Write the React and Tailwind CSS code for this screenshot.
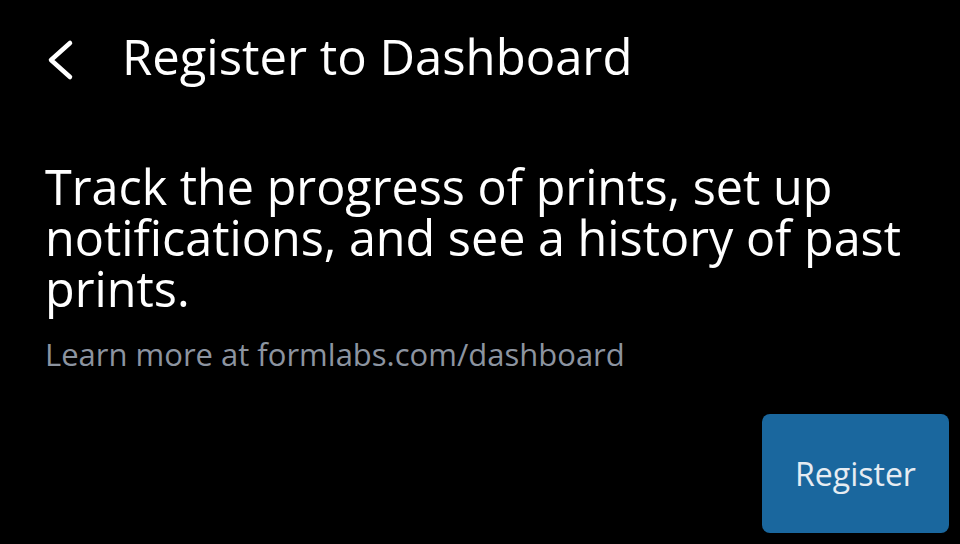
export default function App() {
  return (
    <div className="w-[960px] h-[544px] bg-black text-white flex flex-col font-['Open_Sans',sans-serif] overflow-hidden">
      <div className="flex items-center h-[112px] pl-[40px] shrink-0">
        <button className="w-[40px] h-[40px] flex items-center justify-center mt-[8px]">
          <svg width="30" height="42" viewBox="0 0 30 42" fill="none">
            <polyline points="25,4 6,21 25,38" stroke="white" strokeWidth="4.5" strokeLinecap="round" strokeLinejoin="round" />
          </svg>
        </button>
        <h1 className="ml-[42px] text-[49px] leading-none">Register to Dashboard</h1>
      </div>

      <div className="pl-[45px] pr-[40px] mt-[49px]">
        <p className="text-[48.5px] leading-[51px]">
          Track the progress of prints, set up<br />
          notifications, and see a history of past<br />
          prints.
        </p>
        <p className="mt-[22px] text-[31px] leading-[36px] text-[#8c94a0]">
          Learn more at formlabs.com/dashboard
        </p>
      </div>

      <div className="flex-1 flex items-end justify-end pr-[11px] pb-[11px]">
        <button className="w-[187px] h-[119px] rounded-[8px] bg-[#1a679e] text-[#e6ecf2] text-[32px]">
          Register
        </button>
      </div>
    </div>
  )
}
